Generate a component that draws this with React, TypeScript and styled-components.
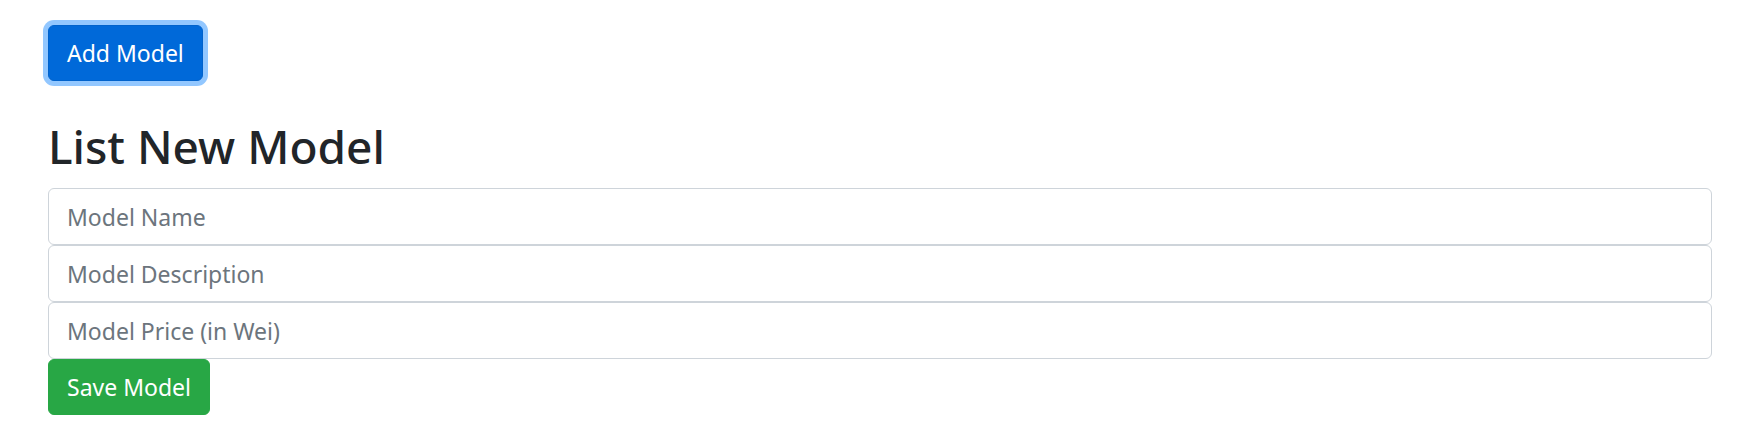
import React from "react";
import styled, { createGlobalStyle } from "styled-components";

const Global = createGlobalStyle`
  html, body { margin: 0; padding: 0; background: #ffffff; }
  body {
    font-family: "Noto Sans", "Open Sans", sans-serif;
    color: #212529;
  }
  * { box-sizing: border-box; }
`;

const Page = styled.div`
  padding: 25px 26px 0 48px;
  display: flex;
  flex-direction: column;
  align-items: flex-start;
`;

const Button = styled.button<{ $variant: "primary" | "success"; $focused?: boolean }>`
  font-family: inherit;
  font-size: 23px;
  line-height: 36px;
  padding: 9px 18px;
  height: 56px;
  border-radius: 6px;
  color: #ffffff;
  cursor: pointer;
  border: 1.5px solid ${(p) => (p.$variant === "primary" ? "#0062cc" : "#28a745")};
  background: ${(p) => (p.$variant === "primary" ? "#0069d9" : "#28a745")};
  box-shadow: ${(p) => (p.$focused ? "0 0 0 5px rgba(38,143,255,0.5)" : "none")};
`;

const Heading = styled.h2`
  margin: 37px 0 13px 0;
  font-size: 46px;
  font-weight: 500;
  line-height: 57px;
  color: #212529;
`;

const Form = styled.form`
  width: 100%;
  display: flex;
  flex-direction: column;
  align-items: flex-start;
`;

const Input = styled.input`
  width: 100%;
  height: 57px;
  padding: 9px 18px;
  font-family: inherit;
  font-size: 23px;
  color: #495057;
  background: #ffffff;
  border: 1.5px solid #ced4da;
  border-radius: 6px;
  outline: none;
  &::placeholder { color: #6c757d; }
`;

export default function App() {
  return (
    <>
      <Global />
      <Page>
        <Button $variant="primary" $focused type="button">Add Model</Button>
        <Heading>List New Model</Heading>
        <Form onSubmit={(e) => e.preventDefault()}>
          <Input placeholder="Model Name" />
          <Input placeholder="Model Description" />
          <Input placeholder="Model Price (in Wei)" />
          <Button $variant="success" type="submit">Save Model</Button>
        </Form>
      </Page>
    </>
  );
}
